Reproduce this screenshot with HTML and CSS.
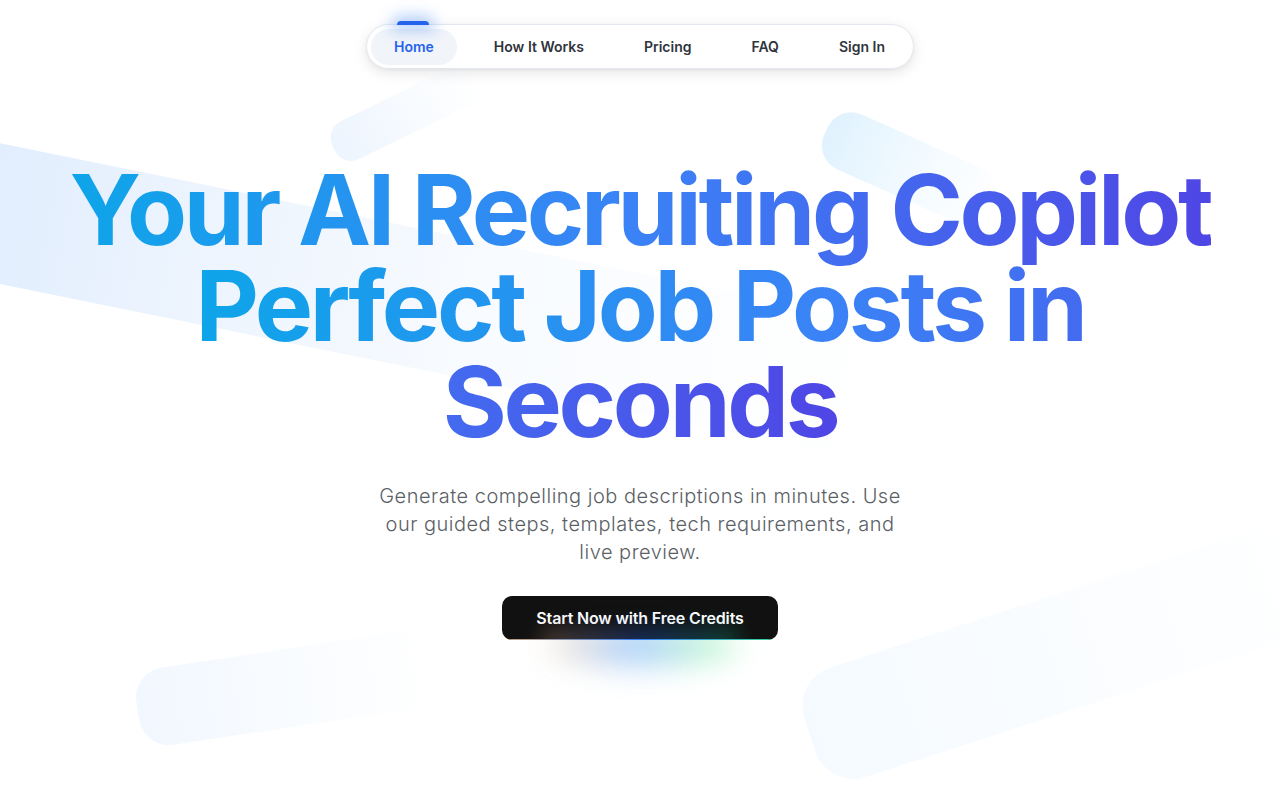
FILE: index.html
```html
<!DOCTYPE html>
<html lang="en">
<head>
<meta charset="utf-8">
<title>AI Recruiting Copilot</title>
<link rel="stylesheet" href="styles.css">
</head>
<body>
<div class="bg">
  <div class="shape s-band"></div>
  <div class="shape s-tl"></div>
  <div class="shape s-tr"></div>
  <div class="shape s-bl"></div>
  <div class="shape s-br"></div>
</div>
<header class="top">
  <nav class="nav">
    <a class="nav-item active" href="#">Home<span class="indicator"></span></a>
    <a class="nav-item" href="#">How It Works</a>
    <a class="nav-item" href="#">Pricing</a>
    <a class="nav-item" href="#">FAQ</a>
    <a class="nav-item" href="#">Sign In</a>
  </nav>
</header>
<main class="hero">
  <h1 class="title"><span class="grad">Your AI Recruiting Copilot</span><br><span class="grad">Perfect Job Posts in Seconds</span></h1>
  <p class="lead">Generate compelling job descriptions in minutes. Use our guided steps, templates, tech requirements, and live preview.</p>
  <div class="cta-wrap">
    <span class="cta-glow"></span>
    <a class="cta" href="#">Start Now with Free Credits</a>
  </div>
</main>
</body>
</html>
```
FILE: styles.css
```css
* { box-sizing: border-box; }
html, body { margin: 0; padding: 0; }
body {
  width: 1280px;
  height: 800px;
  overflow: hidden;
  background: #ffffff;
  font-family: Inter, "Noto Sans", sans-serif;
  position: relative;
  -webkit-font-smoothing: antialiased;
}

.bg { position: absolute; inset: 0; z-index: 0; overflow: hidden; pointer-events: none; }
.shape { position: absolute; border-radius: 40px; }
.s-band {
  left: -60px; top: 131px; width: 1220px; height: 138px;
  transform: rotate(11.5deg); transform-origin: 0 0;
  background: linear-gradient(90deg, rgba(219,234,254,0.9) 0%, rgba(228,239,253,0.7) 22%, rgba(238,245,255,0.45) 45%, rgba(248,251,255,0.2) 70%, rgba(255,255,255,0) 92%);
  border-radius: 30px;
}
.s-tl {
  left: 343px; top: 125px; width: 160px; height: 42px;
  transform: rotate(-26deg); transform-origin: 0 100%;
  background: linear-gradient(90deg, rgba(236,244,254,0.95), rgba(246,250,255,0.5) 70%, rgba(255,255,255,0));
  border-radius: 18px;
}
.s-tr {
  left: 838px; top: 104px; width: 185px; height: 60px;
  transform: rotate(24deg); transform-origin: 0 0;
  background: linear-gradient(90deg, rgba(224,242,254,1), rgba(236,248,255,0.55) 60%, rgba(255,255,255,0));
  border-radius: 26px;
}
.s-bl {
  left: 132px; top: 672px; width: 300px; height: 78px;
  transform: rotate(-8.5deg); transform-origin: 0 0;
  background: linear-gradient(90deg, rgba(239,246,255,0.85), rgba(246,250,255,0.55) 60%, rgba(255,255,255,0.15));
  border-radius: 30px;
}
.s-br {
  left: 792px; top: 680px; width: 520px; height: 115px;
  transform: rotate(-18deg); transform-origin: 0 0;
  background: linear-gradient(90deg, rgba(240,248,255,0.7), rgba(245,250,255,0.45) 55%, rgba(252,254,255,0.2));
  border-radius: 40px;
}

.top {
  position: relative; z-index: 2;
  display: flex; justify-content: center;
  padding-top: 24px;
}
.nav {
  display: flex; align-items: center; gap: 14px;
  padding: 4px 5px 4px 4px;
  height: 45px;
  background: rgba(255,255,255,0.95);
  border: 1px solid #e3e8ef;
  border-radius: 999px;
  box-shadow: 0 4px 14px rgba(15,23,42,0.10), 0 1px 3px rgba(15,23,42,0.06);
}
.nav-item {
  position: relative;
  display: flex; align-items: center;
  height: 36px;
  padding: 0 23px;
  border-radius: 999px;
  font-size: 14px; font-weight: 600;
  color: #30343c;
  text-decoration: none;
}
.nav-item.active {
  background: #f1f4f9;
  color: #2563eb;
}
.indicator {
  position: absolute;
  left: 26px; top: -8px;
  width: 32px; height: 4px;
  border-radius: 4px 4px 0 0;
  background: #2563eb;
  box-shadow: 0 0 14px 6px rgba(59,130,246,0.35);
}

.hero {
  position: relative; z-index: 1;
  display: flex; flex-direction: column; align-items: center;
  text-align: center;
  padding-top: 93px;
}
.title {
  margin: 0;
  font-size: 98px;
  line-height: 96px;
  font-weight: 700;
  letter-spacing: -0.034em;
}
.grad {
  background: linear-gradient(90deg, #0ea5e9 0%, #3b82f6 50%, #4f46e5 100%);
  -webkit-background-clip: text;
  background-clip: text;
  color: transparent;
  -webkit-text-fill-color: transparent;
}
.lead {
  margin: 32px 0 0;
  width: 540px;
  font-size: 20px;
  line-height: 28px;
  font-weight: 300;
  letter-spacing: 0.5px;
  color: #5b5f66;
}
.cta-wrap {
  position: relative;
  margin-top: 30px;
}
.cta-glow {
  position: absolute;
  left: 46px; right: 40px; top: 30px; height: 40px;
  border-radius: 50%;
  background: linear-gradient(90deg, rgba(214,170,120,0.6), rgba(96,165,250,0.85) 45%, rgba(110,231,160,0.75) 85%);
  filter: blur(15px);
  opacity: 0.6;
}
.cta {
  position: relative;
  display: flex; align-items: center; justify-content: center;
  width: 276px; height: 44px;
  border-radius: 10px;
  background: #111111;
  color: #ffffff;
  font-size: 16px; font-weight: 600;
  text-decoration: none;
  letter-spacing: -0.01em;
  overflow: hidden;
}
.cta::after {
  content: "";
  position: absolute; left: 0; right: 0; bottom: 0; height: 1px;
  background: linear-gradient(90deg, #c9a27a, #3b82f6 50%, #34d399);
}
.cta::before {
  content: "";
  position: absolute; left: 40px; right: 40px; bottom: -14px; height: 26px;
  background: linear-gradient(90deg, rgba(180,130,90,0.35), rgba(37,99,235,0.35) 50%, rgba(16,185,129,0.3));
  filter: blur(10px);
}
```
